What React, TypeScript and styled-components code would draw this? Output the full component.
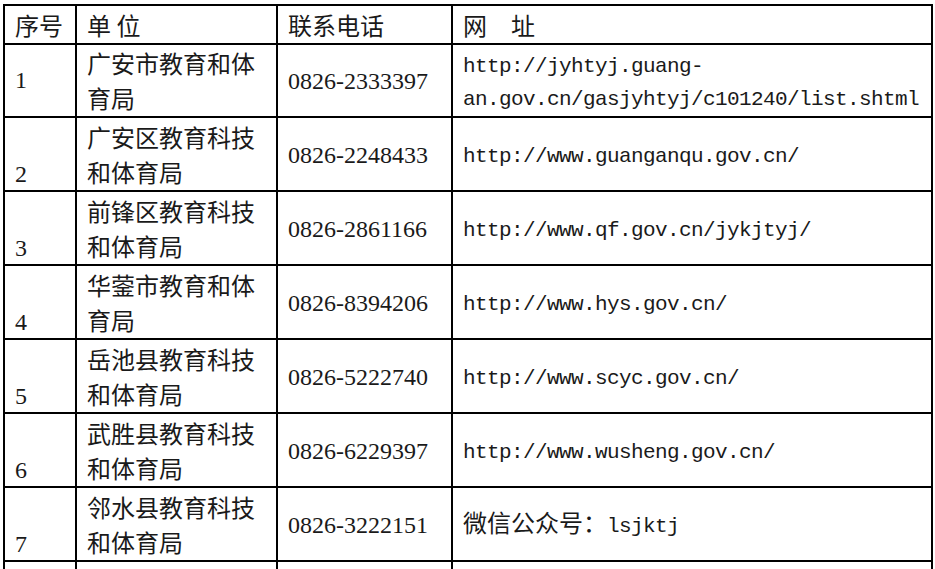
import React from "react";
import styled, { createGlobalStyle } from "styled-components";

const GlobalStyle = createGlobalStyle`
    html, body {
        margin: 0;
        padding: 0;
        background: #fff;
        overflow: hidden;
    }
    body {
        font-family: "Noto Sans CJK SC", "Noto Sans", sans-serif;
        color: #1a1a1a;
    }
`;

const Page = styled.div`
    width: 935px;
    height: 569px;
    padding: 4px 0 0 3px;
    box-sizing: border-box;
    overflow: hidden;
`;

const Table = styled.table`
    width: 928px;
    border-collapse: collapse;
    table-layout: fixed;
    border: 2px solid #000;
`;

const Col = styled.col<{ w: number }>`
    width: ${({ w }) => w}px;
`;

const HeadCell = styled.th`
    height: 37px;
    border: 2px solid #000;
    padding: 0 0 0 10px;
    text-align: left;
    font-weight: normal;
    font-size: 24px;
    line-height: 35px;
    white-space: pre;
    vertical-align: middle;
    overflow: hidden;
`;

// row box = height + vertical padding, kept at 71px (first row) / 72px
const Cell = styled.td<{ valign?: "middle" | "bottom"; short?: boolean; padBottom?: number }>`
    height: ${({ short, padBottom = 1 }) => (short ? 71 : 72) - padBottom}px;
    border: 2px solid #000;
    padding: 0 6px ${({ padBottom = 1 }) => padBottom}px 10px;
    font-size: 24px;
    line-height: 35px;
    vertical-align: ${({ valign }) => valign || "middle"};
    white-space: nowrap;
    overflow: hidden;
`;

const Num = styled.div`
    font-family: "Liberation Serif", serif;
    font-size: 24px;
    line-height: 30px;
`;

const Phone = styled.span`
    font-family: "Liberation Serif", serif;
    font-size: 24px;
`;

const Url = styled.span`
    font-family: "Liberation Mono", monospace;
    font-size: 21px;
    line-height: 34px;
    letter-spacing: -0.6px;
`;

const UrlBlock = styled.div`
    font-family: "Liberation Mono", monospace;
    font-size: 21px;
    line-height: 33px;
    letter-spacing: -0.6px;
`;

interface IRow {
    no: string;
    unit: [string, string];
    phone: string;
    web: React.ReactNode;
    twoLineWeb?: boolean;
}

const rows: IRow[] = [
    {
        no: "1",
        unit: ["广安市教育和体", "育局"],
        phone: "0826-2333397",
        web: (
            <>
                <UrlBlock>http://jyhtyj.guang-</UrlBlock>
                <UrlBlock>an.gov.cn/gasjyhtyj/c101240/list.shtml</UrlBlock>
            </>
        ),
        twoLineWeb: true,
    },
    { no: "2", unit: ["广安区教育科技", "和体育局"], phone: "0826-2248433", web: <Url>http://www.guanganqu.gov.cn/</Url> },
    { no: "3", unit: ["前锋区教育科技", "和体育局"], phone: "0826-2861166", web: <Url>http://www.qf.gov.cn/jykjtyj/</Url> },
    { no: "4", unit: ["华蓥市教育和体", "育局"], phone: "0826-8394206", web: <Url>http://www.hys.gov.cn/</Url> },
    { no: "5", unit: ["岳池县教育科技", "和体育局"], phone: "0826-5222740", web: <Url>http://www.scyc.gov.cn/</Url> },
    { no: "6", unit: ["武胜县教育科技", "和体育局"], phone: "0826-6229397", web: <Url>http://www.wusheng.gov.cn/</Url> },
    {
        no: "7",
        unit: ["邻水县教育科技", "和体育局"],
        phone: "0826-3222151",
        web: (
            <>
                微信公众号：<Url>lsjktj</Url>
            </>
        ),
    },
];

const App: React.FC = () => {
    return (
        <Page>
            <GlobalStyle />
            <Table>
                <colgroup>
                    <Col w={72} />
                    <Col w={201} />
                    <Col w={175} />
                    <Col w={480} />
                </colgroup>
                <thead>
                    <tr>
                        <HeadCell>序号</HeadCell>
                        <HeadCell>单 位</HeadCell>
                        <HeadCell>联系电话</HeadCell>
                        <HeadCell>网{"\u3000"}址</HeadCell>
                    </tr>
                </thead>
                <tbody>
                    {rows.map((row, i) => (
                        <tr key={row.no}>
                            <Cell short={i === 0} valign={i === 0 ? "middle" : "bottom"}>
                                <Num>{row.no}</Num>
                            </Cell>
                            <Cell short={i === 0}>
                                {row.unit[0]}
                                <br />
                                {row.unit[1]}
                            </Cell>
                            <Cell short={i === 0}>
                                <Phone>{row.phone}</Phone>
                            </Cell>
                            {row.twoLineWeb ? (
                                <Cell short={i === 0} valign="bottom" padBottom={0}>
                                    {row.web}
                                </Cell>
                            ) : (
                                <Cell short={i === 0}>{row.web}</Cell>
                            )}
                        </tr>
                    ))}
                    <tr>
                        <Cell />
                        <Cell />
                        <Cell />
                        <Cell />
                    </tr>
                </tbody>
            </Table>
        </Page>
    );
};

export default App;
